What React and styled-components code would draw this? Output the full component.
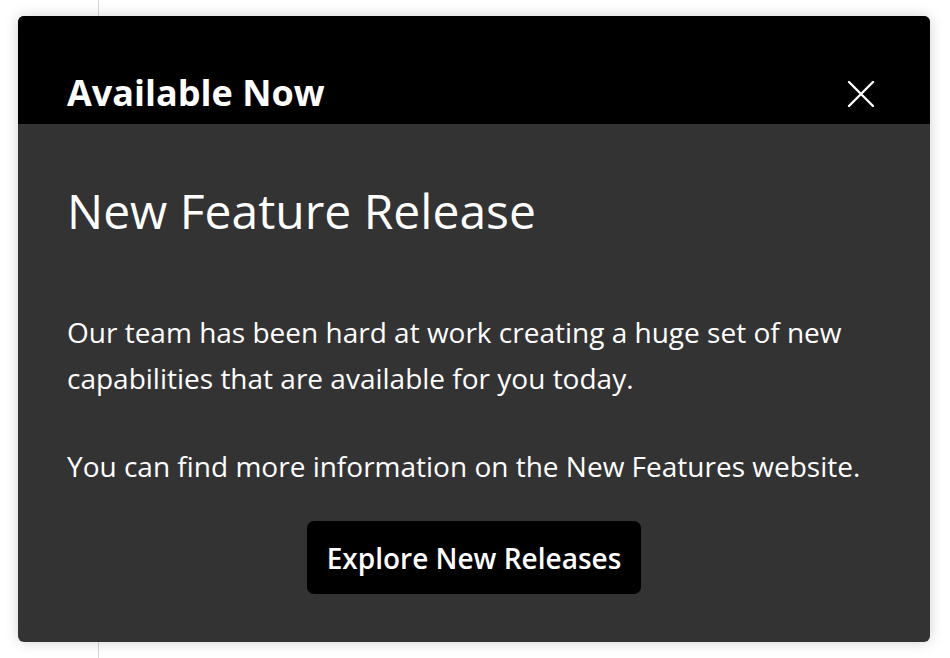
import React from "react";
import styled, { createGlobalStyle } from "styled-components";

const Global = createGlobalStyle`
  html, body { margin: 0; padding: 0; }
  body {
    font-family: "Open Sans", "Noto Sans", sans-serif;
    background: #ffffff;
  }
`;

const Page = styled.div`
  width: 950px;
  height: 658px;
  box-sizing: border-box;
  padding: 16px 20px 16px 18px;
  background-color: #ffffff;
  background-image: linear-gradient(#d4d4d4, #d4d4d4);
  background-size: 1px 100%;
  background-position: 98px 0;
  background-repeat: no-repeat;
`;

const Dialog = styled.section`
  height: 100%;
  display: flex;
  flex-direction: column;
  border-radius: 6px;
  overflow: hidden;
  background: #333333;
  box-shadow: 0 0 14px rgba(0, 0, 0, 0.18);
`;

const Header = styled.header`
  height: 108px;
  flex: none;
  box-sizing: border-box;
  background: #000;
  display: flex;
  align-items: flex-end;
  justify-content: space-between;
  padding: 0 52px 11px 49px;
`;

const HeaderTitle = styled.h2`
  margin: 0;
  color: #fff;
  font-size: 36px;
  font-weight: 700;
  line-height: 40px;
`;

const CloseButton = styled.button`
  width: 34px;
  height: 34px;
  padding: 0;
  margin-bottom: 2px;
  border: none;
  background: transparent;
  display: flex;
  align-items: center;
  justify-content: center;
  cursor: pointer;
`;

const Body = styled.div`
  flex: 1;
  display: flex;
  flex-direction: column;
  padding: 55px 49px 0 49px;
  color: #fff;
`;

const Title = styled.h1`
  margin: 0 0 66px 0;
  font-size: 48px;
  font-weight: 400;
  line-height: 64px;
`;

const Paragraph = styled.p`
  margin: 0 0 ${(p) => p.$gap || 0}px 0;
  font-size: 28px;
  font-weight: 400;
  line-height: 46px;
`;

const Actions = styled.div`
  display: flex;
  justify-content: center;
  margin-top: 32px;
  margin-right: -49px;
  padding-right: 49px;
`;

const PrimaryButton = styled.button`
  width: 334px;
  height: 73px;
  border: none;
  border-radius: 7px;
  background: #000;
  color: #fff;
  font-family: "Open Sans", "Noto Sans", sans-serif;
  font-size: 28px;
  font-weight: 600;
  cursor: pointer;
`;

export default function App() {
  return (
    <>
      <Global />
      <Page>
        <Dialog>
          <Header>
            <HeaderTitle>Available Now</HeaderTitle>
            <CloseButton aria-label="Close">
              <svg width="30" height="30" viewBox="0 0 30 30">
                <path d="M3 3 L27 27 M27 3 L3 27" stroke="#fff" strokeWidth="2.4" strokeLinecap="round" />
              </svg>
            </CloseButton>
          </Header>
          <Body>
            <Title>New Feature Release</Title>
            <Paragraph $gap={42}>
              Our team has been hard at work creating a huge set of new capabilities that are available for you today.
            </Paragraph>
            <Paragraph>You can find more information on the New Features website.</Paragraph>
            <Actions>
              <PrimaryButton>Explore New Releases</PrimaryButton>
            </Actions>
          </Body>
        </Dialog>
      </Page>
    </>
  );
}
